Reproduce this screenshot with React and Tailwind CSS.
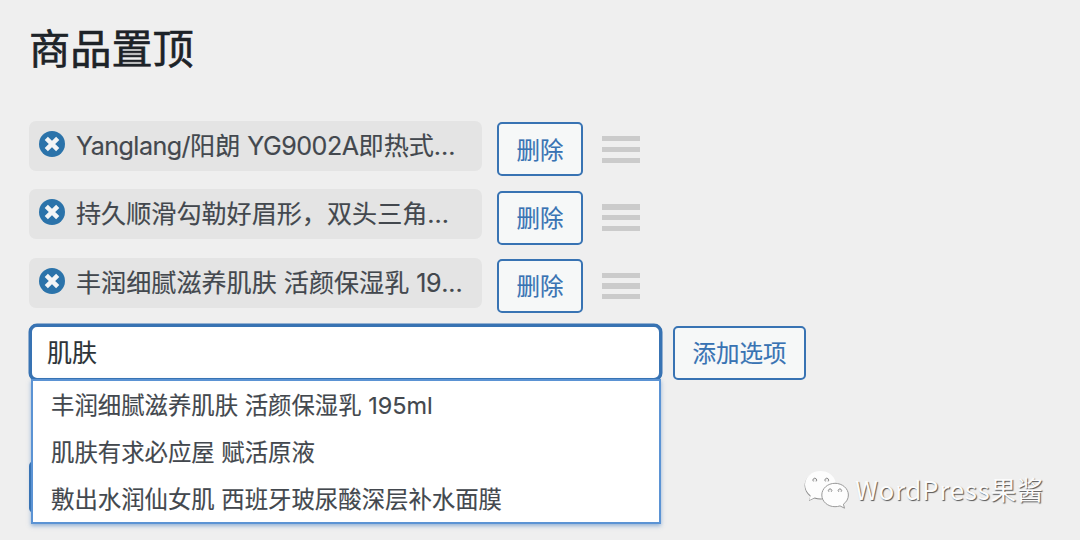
const rows = [
  { head: 'Yanglang/', mid: '阳朗 ', tail: 'YG9002A', end: '即热式' },
  { head: '', mid: '持久顺滑勾勒好眉形，双头三角', tail: '', end: '' },
  { head: '', mid: '丰润细腻滋养肌肤 活颜保湿乳 ', tail: '19', end: '' },
];

const options = [
  '丰润细腻滋养肌肤 活颜保湿乳 195ml',
  '肌肤有求必应屋 赋活原液',
  '敷出水润仙女肌 西班牙玻尿酸深层补水面膜',
];

function RemoveIcon() {
  return (
    <svg className="mt-[10px] size-[26px] shrink-0" viewBox="0 0 26 26">
      <circle cx="13" cy="13" r="13" fill="#2b73aa" />
      <path d="M7.300 7.300L18.700 18.700M18.700 7.300L7.300 18.700" stroke="#f3f5f6" strokeWidth="4.500" />
    </svg>
  );
}

function Button({ children, className }) {
  return (
    <button
      className={`flex h-[54px] items-center justify-center rounded-[5px] border-2 border-[#3873b3] bg-[#f6f8f8] pt-[2px] text-[23.5px] leading-none text-[#3873b3] [-webkit-text-stroke:0.15px] ${className}`}
    >
      {children}
    </button>
  );
}

function Row({ row }) {
  return (
    <div className="flex h-[68.3px] items-start">
      <div className="flex h-[50px] w-[453px] rounded-[7px] bg-[#e4e4e4] pl-[10px]">
        <RemoveIcon />
        <div className="ml-[11px] whitespace-pre text-[25.1px] leading-[50px] text-[#43484e] [-webkit-text-stroke:0.15px]">
          <span className="tracking-[-0.55px]">{row.head}</span>
          {row.mid}
          <span className="tracking-[-0.5px]">{row.tail}</span>
          {row.end}
          <span>...</span>
        </div>
      </div>
      <Button className="mt-[1.4px] ml-[15px] w-[86px]">删除</Button>
      <div className="mt-[15px] ml-[19px] flex w-[38px] flex-col gap-[5.500px]">
        <div className="h-[5.300px] bg-[#cbcbcb]" />
        <div className="h-[5.300px] bg-[#cbcbcb]" />
        <div className="h-[5.300px] bg-[#cbcbcb]" />
      </div>
    </div>
  );
}

function Watermark() {
  return (
    <div className="absolute top-[469px] left-[803px] flex items-center">
      <svg className="h-[42px] w-[48px]" viewBox="0 0 48 42">
        <path
          d="M17.500 2C8.800 2 2 8.200 2 15.800c0 4.300 2.200 8 5.600 10.700L6.300 31.200l5.400-2.700c4 1.400 8 1.400 12 .2l9-15.500C31 6.500 25 2 17.500 2Z"
          fill="#8c8c8c"
          transform="translate(-.4 .9)"
        />
        <path
          d="M17.500 2C8.800 2 2 8.200 2 15.800c0 4.300 2.200 8 5.600 10.700L6.300 31.200l5.400-2.700c4 1.400 8 1.400 12 .2l9-15.500C31 6.500 25 2 17.500 2Z"
          fill="#fdfdfd"
        />
        <path
          d="M32 14.300c-7.300 0-13.200 5.200-13.200 11.700S24.700 37.700 32 37.700c1.800 0 3.500-.3 5-.8l4.500 2.300-1.100-4c3.100-2.200 5-5.500 5-9.200 0-6.500-6.100-11.700-13.400-11.700Z"
          fill="#fdfdfd"
          stroke="#9a9a9a"
          strokeWidth="1"
        />
        <g fill="#eeeeee" stroke="#8c8c8c" strokeWidth="1">
          <path d="M10.400 12.400a1.900 1.900 0 1 1 2.800 0M22.400 12.400a1.900 1.900 0 1 1 2.800 0M25.800 22.700a1.700 1.700 0 1 1 2.600 0M35.600 22.700a1.700 1.700 0 1 1 2.600 0" />
        </g>
      </svg>
      <span className="-mt-[3px] ml-[4px] whitespace-nowrap font-['Noto_Sans_CJK_SC',sans-serif] text-[26px] leading-[42px] tracking-[0.650px] text-[#fbfbfb] [text-shadow:1px_1px_1px_#555555]">
        WordPress果酱
      </span>
    </div>
  );
}

export default function App() {
  return (
    <div className="relative h-[540px] w-[1080px] overflow-hidden bg-[#efefef] pl-[29px] font-['Inter','Noto_Sans_CJK_SC',sans-serif]">
      <h1 className="h-[121px] pt-[20px] text-[41.200px] leading-[58px] text-[#1d2328] [-webkit-text-stroke:0.6px]">商品置顶</h1>
      {rows.map((row) => (
        <Row key={row.mid} row={row} />
      ))}
      <div className="-mt-[2px] flex items-start">
        <div className="relative w-[633px]">
          <div className="flex h-[57px] items-center rounded-[8px] border-[3px] border-[#3873b3] bg-white pt-[3px] pl-[15px] text-[25px] text-[#2c3338] ring-[0.500px] ring-[#3873b3] [-webkit-text-stroke:0.15px]">
            肌肤
          </div>
          <div className="absolute top-[137px] left-0 h-[52px] w-[20px] rounded-[5px] bg-[#3873b3]" />
          <ul className="absolute top-[55px] left-[2px] h-[145px] w-[630px] border-2 border-[#5b93d4] bg-white pt-[1px] pl-[18px] text-[23.400px] leading-[47px] text-[#43484e] shadow-[0_2px_4px_rgba(60,120,190,0.5)] [-webkit-text-stroke:0.15px]">
            {options.map((o) => (
              <li key={o} className="whitespace-nowrap">{o}</li>
            ))}
          </ul>
        </div>
        <Button className="mt-[2px] ml-[11px] w-[133px]">添加选项</Button>
      </div>
      <Watermark />
    </div>
  );
}
